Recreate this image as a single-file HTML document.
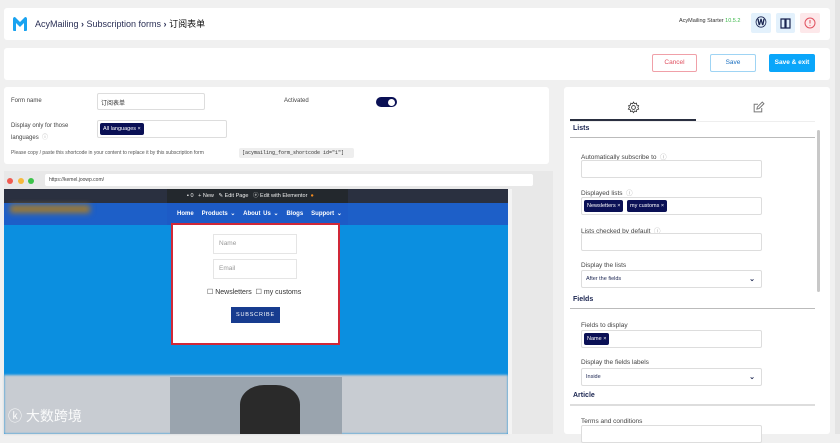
<!DOCTYPE html>
<html><head><meta charset="utf-8"><style>
*{box-sizing:border-box;margin:0;padding:0}
body{width:840px;height:434px;overflow:hidden;background:#f0f0f0;font-family:"Liberation Sans","Noto Sans CJK SC",sans-serif;color:#333;position:relative}
.a{position:absolute}
.card{position:absolute;background:#fff;border-radius:3px}
.t{position:absolute;white-space:nowrap}
.inp{position:absolute;border:1px solid #ddd;background:#fff;border-radius:2px}
.tag{position:absolute;background:#0a1055;color:#fff;font-size:5.5px;padding:0 3px;height:11px;line-height:11px;border-radius:2px}
.lbl{font-size:6.5px;color:#444}
.sec{font-size:7px;font-weight:bold;color:#1a2450}
.hr{position:absolute;height:1px;background:#bbb}
</style></head><body>
<div class="card" style="left:4px;top:8px;width:826px;height:32px"></div>
<svg class="a" style="left:12px;top:16px" width="16" height="16" viewBox="0 0 16 16"><path d="M1 3 Q1 1 3 1 L8 6 L13 1 Q15 1 15 3 V14 Q15 15 14 15 H12 V7 L8 11 L4 7 V15 H2 Q1 15 1 14Z" fill="#1aa3f0"/></svg>
<div class="t" style="left:35px;top:17px;font-size:9px;color:#2a2f55">AcyMailing <b>›</b> Subscription forms <b>›</b> <span style="color:#111">订阅表单</span></div>
<div class="t" style="left:679px;top:18px;font-size:5.5px;color:#333">AcyMailing Starter <span style="color:#3bb84a">10.5.2</span></div>
<div class="a" style="left:751px;top:13px;width:20px;height:20px;background:#e3f1fc;border-radius:2px;font:bold 11px 'Liberation Serif';color:#1a2450;text-align:center;line-height:20px">Ⓦ</div>
<div class="a" style="left:776px;top:13px;width:19px;height:20px;background:#e3f1fc;border-radius:2px"><svg width="19" height="20"><path d="M5 6h4v9H5zM10 6h4v9h-4z" fill="none" stroke="#1a2450" stroke-width="1.2"/></svg></div>
<div class="a" style="left:800px;top:13px;width:20px;height:20px;background:#fde8ea;border-radius:2px"><svg width="20" height="20"><circle cx="10" cy="10" r="5" fill="none" stroke="#e0505e" stroke-width="1"/><path d="M10 7v3.5M10 12v.8" stroke="#e0505e"/></svg></div>
<div class="card" style="left:4px;top:48px;width:826px;height:32px"></div>
<div class="a" style="left:652px;top:54px;width:45px;height:18px;border:1px solid #f0a0a8;border-radius:2px;color:#e05060;font-size:6.5px;text-align:center;line-height:16px">Cancel</div>
<div class="a" style="left:710px;top:54px;width:46px;height:18px;border:1px solid #9fd4f4;border-radius:2px;color:#1a6fc0;font-size:6.5px;text-align:center;line-height:16px">Save</div>
<div class="a" style="left:769px;top:54px;width:46px;height:18px;background:#0aa6fa;border-radius:2px;color:#fff;font-size:6.5px;font-weight:bold;text-align:center;line-height:18px">Save &amp; exit</div>
<div class="card" style="left:4px;top:87px;width:545px;height:77px"></div>
<div class="t lbl" style="left:11px;top:98px;font-size:6px">Form name</div>
<div class="inp" style="left:97px;top:93px;width:108px;height:17px"></div>
<div class="t" style="left:101px;top:98px;font-size:6px">订阅表单</div>
<div class="t lbl" style="left:284px;top:98px;font-size:6px">Activated</div>
<div class="a" style="left:376px;top:97px;width:21px;height:10px;background:#0a1055;border-radius:5px"><div class="a" style="left:12px;top:1.5px;width:7px;height:7px;background:#fff;border-radius:50%"></div></div>
<div class="t lbl" style="left:11px;top:120px;font-size:6px;line-height:12px">Display only for those<br>languages &nbsp;<span style="color:#aaa">ⓘ</span></div>
<div class="inp" style="left:97px;top:120px;width:130px;height:18px"></div>
<div class="tag" style="left:100px;top:123px;height:12px;line-height:12px">All languages ×</div>
<div class="t" style="left:11px;top:150px;font-size:5px;color:#555">Please copy / paste this shortcode in your content to replace it by this subscription form</div>
<div class="a" style="left:239px;top:148px;width:115px;height:10px;background:#eee;border-radius:2px;font:5px 'Liberation Mono';line-height:10px;padding-left:3px;color:#333">[acymailing_form_shortcode id="1"]</div>
<div class="a" style="left:4px;top:171px;width:549px;height:263px;background:#e8e8e8"></div>
<div class="a" style="left:7px;top:178px;width:6px;height:6px;border-radius:50%;background:#f05a50"></div>
<div class="a" style="left:18px;top:178px;width:6px;height:6px;border-radius:50%;background:#f6b93b"></div>
<div class="a" style="left:28px;top:178px;width:6px;height:6px;border-radius:50%;background:#3cc34a"></div>
<div class="a" style="left:45px;top:174px;width:488px;height:12px;background:#fff;border-radius:2px;font-size:5px;line-height:12px;padding-left:4px;color:#444">https://kemel.joowp.com/</div>
<div class="a" style="left:4px;top:189px;width:504px;height:245px;background:#0b8fe0"></div>
<div class="a" style="left:4px;top:189px;width:504px;height:14px;background:#2a3040"></div>
<div class="a" style="left:4px;top:203px;width:504px;height:22px;background:#1d5fc8"></div>
<div class="a" style="left:10px;top:205px;width:80px;height:8px;background:#a07a30;filter:blur(3px)"></div>
<div class="a" style="left:4px;top:375px;width:504px;height:59px;background:#c8ccd2;filter:blur(1px)"></div>
<div class="a" style="left:167px;top:189px;width:181px;height:14px;background:#23282d;font-size:5.5px;color:#eee;line-height:14px;padding-left:20px;white-space:nowrap">▪ 0 &nbsp; + New &nbsp; ✎ Edit Page &nbsp; ⓔ Edit with Elementor &nbsp;<span style="color:#f08a20">●</span></div>
<div class="a" style="left:167px;top:203px;width:181px;height:22px;background:#1d5bc6;font-size:6px;font-weight:bold;color:#fff;line-height:22px;padding-left:10px;white-space:nowrap;word-spacing:1px">Home &nbsp; Products ⌄ &nbsp; About Us ⌄ &nbsp; Blogs &nbsp; Support ⌄</div>
<div class="a" style="left:171px;top:223px;width:169px;height:122px;background:#fff;border:2px solid #d02838"></div>
<div class="a" style="left:213px;top:234px;width:84px;height:20px;border:1px solid #e5e5e5;font-size:6.5px;color:#999;line-height:18px;padding-left:5px">Name</div>
<div class="a" style="left:213px;top:259px;width:84px;height:20px;border:1px solid #e5e5e5;font-size:6.5px;color:#999;line-height:18px;padding-left:5px">Email</div>
<div class="t" style="left:207px;top:288px;font-size:7px;color:#333">☐ Newsletters &nbsp;☐ my customs</div>
<div class="a" style="left:231px;top:307px;width:49px;height:16px;background:#173c8f;color:#fff;font-size:5.5px;letter-spacing:.8px;text-align:center;line-height:16px">SUBSCRIBE</div>
<div class="a" style="left:170px;top:377px;width:172px;height:57px;background:#9aa4ae"></div>
<div class="a" style="left:240px;top:385px;width:60px;height:49px;background:#2a2a2a;border-radius:40% 40% 0 0"></div>
<div class="t" style="left:8px;top:406px;font-size:14px;color:#fff;opacity:.9">ⓚ 大数跨境</div>
<div class="a" style="left:508px;top:189px;width:4px;height:245px;background:#f4f4f4"></div>
<div class="card" style="left:564px;top:87px;width:266px;height:347px"></div>
<svg class="a" style="left:627px;top:101px" width="13" height="13" viewBox="0 0 24 24"><circle cx="12" cy="12" r="3.5" fill="none" stroke="#333" stroke-width="1.6"/><path d="M12 2l2 3 3.5-1 .5 3.5 3.5 1-1.5 3.2 1.5 3.3-3.5 1-.5 3.5-3.5-1-2 3-2-3-3.5 1-.5-3.5-3.5-1L4.5 12 3 8.5l3.5-1L7 4l3.5 1z" fill="none" stroke="#333" stroke-width="1.5"/></svg>
<svg class="a" style="left:752px;top:101px" width="13" height="13" viewBox="0 0 24 24"><path d="M18 13v7H4V6h7" fill="none" stroke="#777" stroke-width="1.8"/><path d="M9 15l1-4 9-9 3 3-9 9z" fill="none" stroke="#777" stroke-width="1.8"/></svg>
<div class="hr" style="left:570px;top:121px;width:245px;background:#eee"></div>
<div class="a" style="left:570px;top:119px;width:126px;height:2px;background:#2a2f40"></div>
<div class="t sec" style="left:573px;top:125px">Lists</div>
<div class="hr" style="left:570px;top:137px;width:245px"></div>
<div class="a" style="left:817px;top:130px;width:3px;height:162px;background:#c8c8c8;border-radius:2px"></div>
<div class="t lbl" style="left:581px;top:151px">Automatically subscribe to &nbsp;<span style="color:#aaa">ⓘ</span></div>
<div class="inp" style="left:581px;top:160px;width:181px;height:18px"></div>
<div class="t lbl" style="left:581px;top:187px">Displayed lists &nbsp;<span style="color:#aaa">ⓘ</span></div>
<div class="inp" style="left:581px;top:197px;width:181px;height:18px"></div>
<div class="tag" style="left:584px;top:200px;height:12px;line-height:12px">Newsletters ×</div>
<div class="tag" style="left:627px;top:200px;height:12px;line-height:12px">my customs ×</div>
<div class="t lbl" style="left:581px;top:225px">Lists checked by default &nbsp;<span style="color:#aaa">ⓘ</span></div>
<div class="inp" style="left:581px;top:233px;width:181px;height:18px"></div>
<div class="t lbl" style="left:581px;top:262px">Display the lists</div>
<div class="inp" style="left:581px;top:270px;width:181px;height:18px;font-size:5.5px;line-height:17px;padding-left:4px;color:#1a2450">After the fields<span style="position:absolute;right:6px;font-size:7px;font-weight:bold">⌄</span></div>
<div class="t sec" style="left:573px;top:296px">Fields</div>
<div class="hr" style="left:570px;top:308px;width:245px"></div>
<div class="t lbl" style="left:581px;top:322px">Fields to display</div>
<div class="inp" style="left:581px;top:330px;width:181px;height:18px"></div>
<div class="tag" style="left:584px;top:333px;height:12px;line-height:12px">Name ×</div>
<div class="t lbl" style="left:581px;top:359px">Display the fields labels</div>
<div class="inp" style="left:581px;top:368px;width:181px;height:18px;font-size:5.5px;line-height:17px;padding-left:4px;color:#1a2450">Inside<span style="position:absolute;right:6px;font-size:7px;font-weight:bold">⌄</span></div>
<div class="t sec" style="left:573px;top:392px">Article</div>
<div class="a" style="left:570px;top:404px;width:245px;height:2px;background:#ddd"></div>
<div class="t lbl" style="left:581px;top:418px">Terms and conditions</div>
<div class="inp" style="left:581px;top:425px;width:181px;height:18px"></div>
<div class="a" style="left:835px;top:0;width:5px;height:434px;background:#e4e4e4"></div>
</body></html>
